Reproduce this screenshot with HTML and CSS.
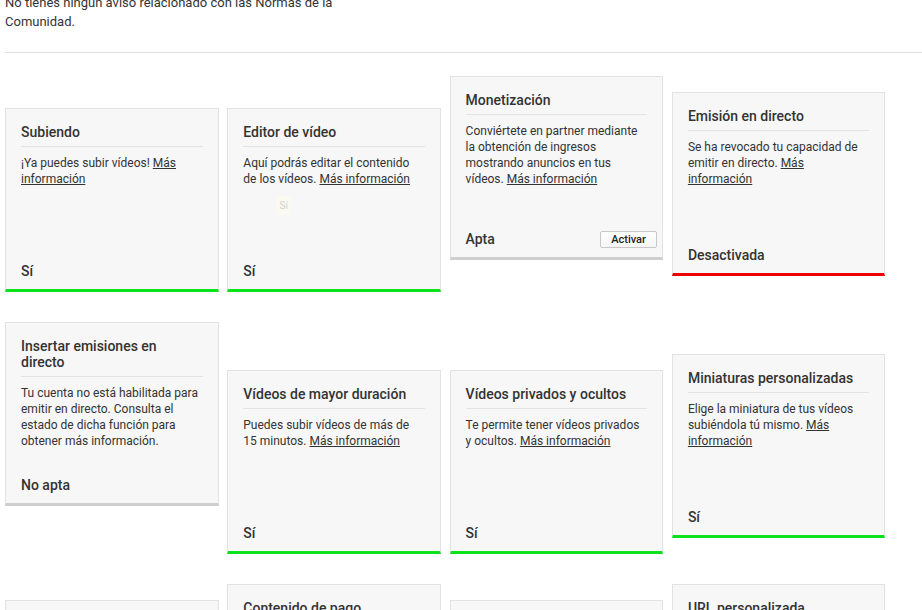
FILE: index.html
```html
<!DOCTYPE html>
<html lang="es">
<head>
    <meta charset="UTF-8">
    <meta name="viewport" content="width=device-width, initial-scale=1.0">
    <title>Estado y funciones</title>
    <link rel="stylesheet" href="styles.css">
</head>
<body>

<div class="page">
    <p class="notice">No tienes ningún aviso relacionado con las Normas de la Comunidad.</p>
    <div class="divider"></div>

    <div class="features">
        <!-- fila 1 -->
        <div class="card ok drop-32">
            <h3 class="card-title">Subiendo</h3>
            <p class="card-text">¡Ya puedes subir vídeos! <a href="#">Más información</a></p>
            <div class="card-foot"><span class="card-status">Sí</span></div>
        </div>
        <div class="card ok drop-32">
            <h3 class="card-title">Editor de vídeo</h3>
            <p class="card-text">Aquí podrás editar el contenido de los vídeos. <a href="#">Más información</a></p>
            <span class="ghost-tip">Sí</span>
            <div class="card-foot"><span class="card-status">Sí</span></div>
        </div>
        <div class="card">
            <h3 class="card-title">Monetización</h3>
            <p class="card-text">Conviértete en partner mediante la obtención de ingresos mostrando anuncios en tus vídeos. <a href="#">Más información</a></p>
            <div class="card-foot">
                <span class="card-status">Apta</span>
                <button class="btn-small">Activar</button>
            </div>
        </div>
        <div class="card off drop-16">
            <h3 class="card-title">Emisión en directo</h3>
            <p class="card-text">Se ha revocado tu capacidad de emitir en directo. <a href="#">Más información</a></p>
            <div class="card-foot"><span class="card-status">Desactivada</span></div>
        </div>

        <!-- fila 2 -->
        <div class="card">
            <h3 class="card-title">Insertar emisiones en directo</h3>
            <p class="card-text">Tu cuenta no está habilitada para emitir en directo. Consulta el estado de dicha función para obtener más información.</p>
            <div class="card-foot"><span class="card-status">No apta</span></div>
        </div>
        <div class="card ok drop-48">
            <h3 class="card-title">Vídeos de mayor duración</h3>
            <p class="card-text">Puedes subir vídeos de más de 15 minutos. <a href="#">Más información</a></p>
            <div class="card-foot"><span class="card-status">Sí</span></div>
        </div>
        <div class="card ok drop-48">
            <h3 class="card-title">Vídeos privados y ocultos</h3>
            <p class="card-text">Te permite tener vídeos privados y ocultos. <a href="#">Más información</a></p>
            <div class="card-foot"><span class="card-status">Sí</span></div>
        </div>
        <div class="card ok drop-32">
            <h3 class="card-title">Miniaturas personalizadas</h3>
            <p class="card-text">Elige la miniatura de tus vídeos subiéndola tú mismo. <a href="#">Más información</a></p>
            <div class="card-foot"><span class="card-status">Sí</span></div>
        </div>

        <!-- fila 3 -->
        <div class="card ok drop-16">
            <h3 class="card-title">Anotaciones externas</h3>
            <p class="card-text">Enlaza tus anotaciones a sitios web aprobados. <a href="#">Más información</a></p>
            <div class="card-foot"><span class="card-status">Sí</span></div>
        </div>
        <div class="card ok">
            <h3 class="card-title">Contenido de pago</h3>
            <p class="card-text">Ofrece contenido de pago a tus espectadores. <a href="#">Más información</a></p>
            <div class="card-foot"><span class="card-status">Sí</span></div>
        </div>
        <div class="card ok drop-16">
            <h3 class="card-title">Content ID</h3>
            <p class="card-text">Gestiona las reclamaciones de tu contenido. <a href="#">Más información</a></p>
            <div class="card-foot"><span class="card-status">Sí</span></div>
        </div>
        <div class="card">
            <h3 class="card-title">URL personalizada</h3>
            <p class="card-text">Consigue una URL más fácil de recordar para tu canal. <a href="#">Más información</a></p>
            <div class="card-foot"><span class="card-status">No apta</span></div>
        </div>
    </div>
</div>

</body>
</html>
```

FILE: styles.css
```css
/* Estado y funciones */
body {
    margin: 0;
    font-family: Roboto, 'Liberation Sans', Arial, sans-serif;
    color: #333;
    background: #fff;
    overflow: hidden;
}
.page {
    padding-left: 5px;
}
.notice {
    width: 340px;
    margin: -7px 0 0;
    font-size: 13px;
    line-height: 19px;
}
.divider {
    margin-top: 21px;
    border-top: 1px solid #e2e2e2;
}
.features {
    display: grid;
    grid-template-columns: repeat(4, 213.5px);
    column-gap: 8.8px;
    row-gap: 30px;
    align-items: start;
    margin-top: 23px;
}
.card {
    position: relative;
    box-sizing: border-box;
    height: 184px;
    display: flex;
    flex-direction: column;
    padding: 0 15px;
    background-color: #f7f7f7;
    border: 1px solid #e2e2e2;
    border-bottom: 3px solid #cfcfcf;
}
.card.ok {
    border-bottom-color: #0ce21a;
}
.card.off {
    border-bottom-color: #ee0000;
}
.drop-16 { margin-top: 16px; }
.drop-32 { margin-top: 32px; }
.drop-48 { margin-top: 48px; }

.card-title {
    margin: 0;
    padding: 15px 0 6px;
    font-size: 14px;
    line-height: 16px;
    font-weight: 500;
    color: #333;
    border-bottom: 1px solid #e3e3e3;
}
.card-text {
    margin: 8px 0 0;
    font-size: 12px;
    line-height: 16px;
}
.card-text a {
    color: #333;
    text-decoration: underline;
}
.card-foot {
    margin-top: auto;
    padding-bottom: 9px;
    display: flex;
    justify-content: space-between;
    align-items: center;
}
.card-status {
    font-size: 14px;
    line-height: 18px;
    font-weight: 500;
}
.btn-small {
    margin-right: -10px;
    height: 17px;
    width: 57px;
    padding: 0;
    font-family: inherit;
    font-size: 11px;
    font-weight: 500;
    color: #222;
    background: linear-gradient(#fff, #f6f6f6);
    border: 1px solid #c8c8c8;
    border-radius: 2px;
}
.ghost-tip {
    position: absolute;
    left: 48px;
    top: 87px;
    width: 15px;
    height: 19px;
    font-size: 10px;
    line-height: 19px;
    text-align: center;
    color: #cfcfcf;
    background: #fafaf0;
}
```
